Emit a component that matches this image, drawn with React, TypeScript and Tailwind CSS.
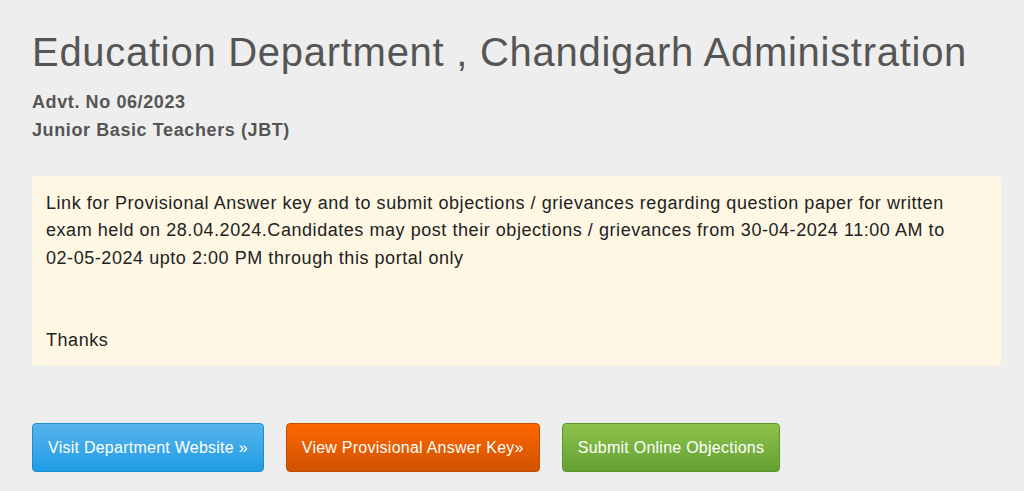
import React from 'react';

const buttons = [
  { label: 'Visit Department Website »', cls: 'bg-gradient-to-b from-[#54b4eb] to-[#1d9ce5] border-[#1b8fd3]' },
  { label: 'View Provisional Answer Key»', cls: 'bg-gradient-to-b from-[#ff6600] to-[#cf5300] border-[#c24d00]' },
  { label: 'Submit Online Objections', cls: 'bg-gradient-to-b from-[#8cc34b] to-[#66a034] border-[#5e9430]' },
];

export default function App() {
  return (
    <div className="min-h-screen bg-[#eeeeee] pl-8 pr-[23px] pt-[28px] font-['Liberation_Sans',Arial,sans-serif]">
      <h1 className="text-[40px] leading-[48px] tracking-[0.72px] text-[#555555]">Education Department , Chandigarh Administration</h1>
      <div className="mt-[12px] text-[18px] font-bold leading-[28px] tracking-[0.6px] text-[#555555]">
        <p>Advt. No 06/2023</p>
        <p>Junior Basic Teachers (JBT)</p>
      </div>
      <div className="mt-[32px] rounded bg-[#fdf7e4] px-[14px] pt-[14px] pb-[12px] text-[18px] leading-[27.4px] tracking-[0.55px] text-[#222222]">
        <p>
          Link for Provisional Answer key and to submit objections / grievances regarding question paper for written exam held on 28.04.2024.Candidates may post their objections / grievances from 30-04-2024 11:00 AM to <span className="whitespace-nowrap">02-05-2024</span> upto 2:00 PM through this portal only
        </p>
        <br />
        <br />
        <p>Thanks</p>
      </div>
      <div className="mt-[57px] flex gap-[22px]">
        {buttons.map((b) => (
          <button
            key={b.label}
            className={`h-[49px] rounded border px-[15px] text-[16px] tracking-[0.25px] text-white ${b.cls}`}
          >
            {b.label}
          </button>
        ))}
      </div>
    </div>
  );
}
